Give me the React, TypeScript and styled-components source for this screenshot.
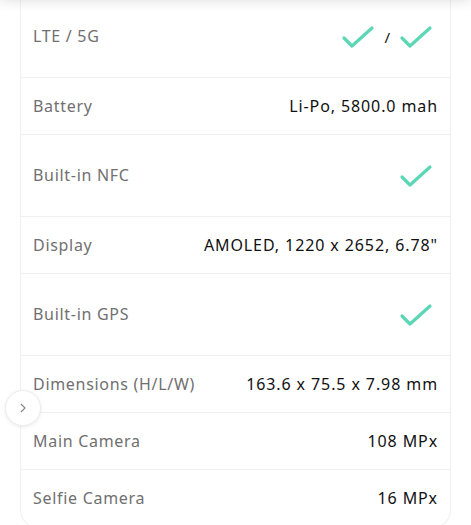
import React from "react";
import styled, { createGlobalStyle } from "styled-components";

const Global = createGlobalStyle`
  html, body { margin: 0; padding: 0; background: #fff; }
  body { font-family: "Noto Sans", "DejaVu Sans", sans-serif; overflow: hidden; }
`;

const Page = styled.div`
  position: relative;
  width: 471px;
  height: 525px;
  overflow: hidden;
  background: #fff;
`;

const TopShade = styled.div`
  position: absolute;
  left: 0;
  right: 0;
  top: -20px;
  height: 20px;
  box-shadow: 0 0 14px rgba(0, 0, 0, 0.14);
  background: #fff;
  z-index: 2;
`;

const Card = styled.div`
  margin: -4px 20px 0 20px;
  border: 1px solid #f0f0f0;
  border-top: none;
  border-radius: 0 0 18px 18px;
  display: flex;
  flex-direction: column;
`;

const Row = styled.div<{ $tall?: boolean; $last?: boolean }>`
  display: flex;
  align-items: center;
  justify-content: space-between;
  box-sizing: border-box;
  height: ${(p) => (p.$tall ? 82 : 57)}px;
  padding: 0 13px 0 12px;
  border-bottom: ${(p) => (p.$last ? "none" : "1px solid #f0f0f0")};
`;

const Label = styled.span`
  font-size: 16px;
  color: #707070;
  letter-spacing: 0.7px;
  margin-top: -1px;
`;

const Value = styled.span`
  font-size: 16px;
  color: #111;
  letter-spacing: 0.9px;
  margin-right: -1px;
  margin-top: -1px;
`;

const Checks = styled.span`
  display: flex;
  align-items: center;
  gap: 6px;
  margin-right: 4px;
`;

const Slash = styled.span`
  font-size: 15px;
  color: #111;
  margin: 0 3px;
`;

const NavButton = styled.div`
  position: absolute;
  left: 5px;
  top: 390px;
  width: 36px;
  height: 36px;
  border-radius: 50%;
  background: #fff;
  border: 1px solid #ececec;
  box-shadow: 0 1px 4px rgba(0, 0, 0, 0.08);
  display: flex;
  align-items: center;
  justify-content: center;
  box-sizing: border-box;
`;

const Check = () => (
  <svg width="34" height="24" viewBox="0 0 34 24">
    <polyline
      points="3,13 11,21 31,3"
      fill="none"
      stroke="#5cd7b5"
      strokeWidth="3.2"
      strokeLinecap="round"
      strokeLinejoin="round"
    />
  </svg>
);

const Chevron = () => (
  <svg width="12" height="12" viewBox="0 0 12 12">
    <polyline points="4,2 8,6 4,10" fill="none" stroke="#888" strokeWidth="1.2" />
  </svg>
);

type Spec = { label: string; value?: string; check?: "one" | "two" };

const specs: Spec[] = [
  { label: "LTE / 5G", check: "two" },
  { label: "Battery", value: "Li-Po, 5800.0 mah" },
  { label: "Built-in NFC", check: "one" },
  { label: "Display", value: "AMOLED, 1220 x 2652, 6.78\"" },
  { label: "Built-in GPS", check: "one" },
  { label: "Dimensions (H/L/W)", value: "163.6 x 75.5 x 7.98 mm" },
  { label: "Main Camera", value: "108 MPx" },
  { label: "Selfie Camera", value: "16 MPx" },
];

export default function App() {
  return (
    <Page>
      <Global />
      <TopShade />
      <Card>
        {specs.map((s, i) => (
          <Row key={s.label} $tall={!!s.check} $last={i === specs.length - 1}>
            <Label>{s.label}</Label>
            {s.check === "two" ? (
              <Checks>
                <Check />
                <Slash>/</Slash>
                <Check />
              </Checks>
            ) : s.check === "one" ? (
              <Checks>
                <Check />
              </Checks>
            ) : (
              <Value>{s.value}</Value>
            )}
          </Row>
        ))}
      </Card>
      <NavButton>
        <Chevron />
      </NavButton>
    </Page>
  );
}
